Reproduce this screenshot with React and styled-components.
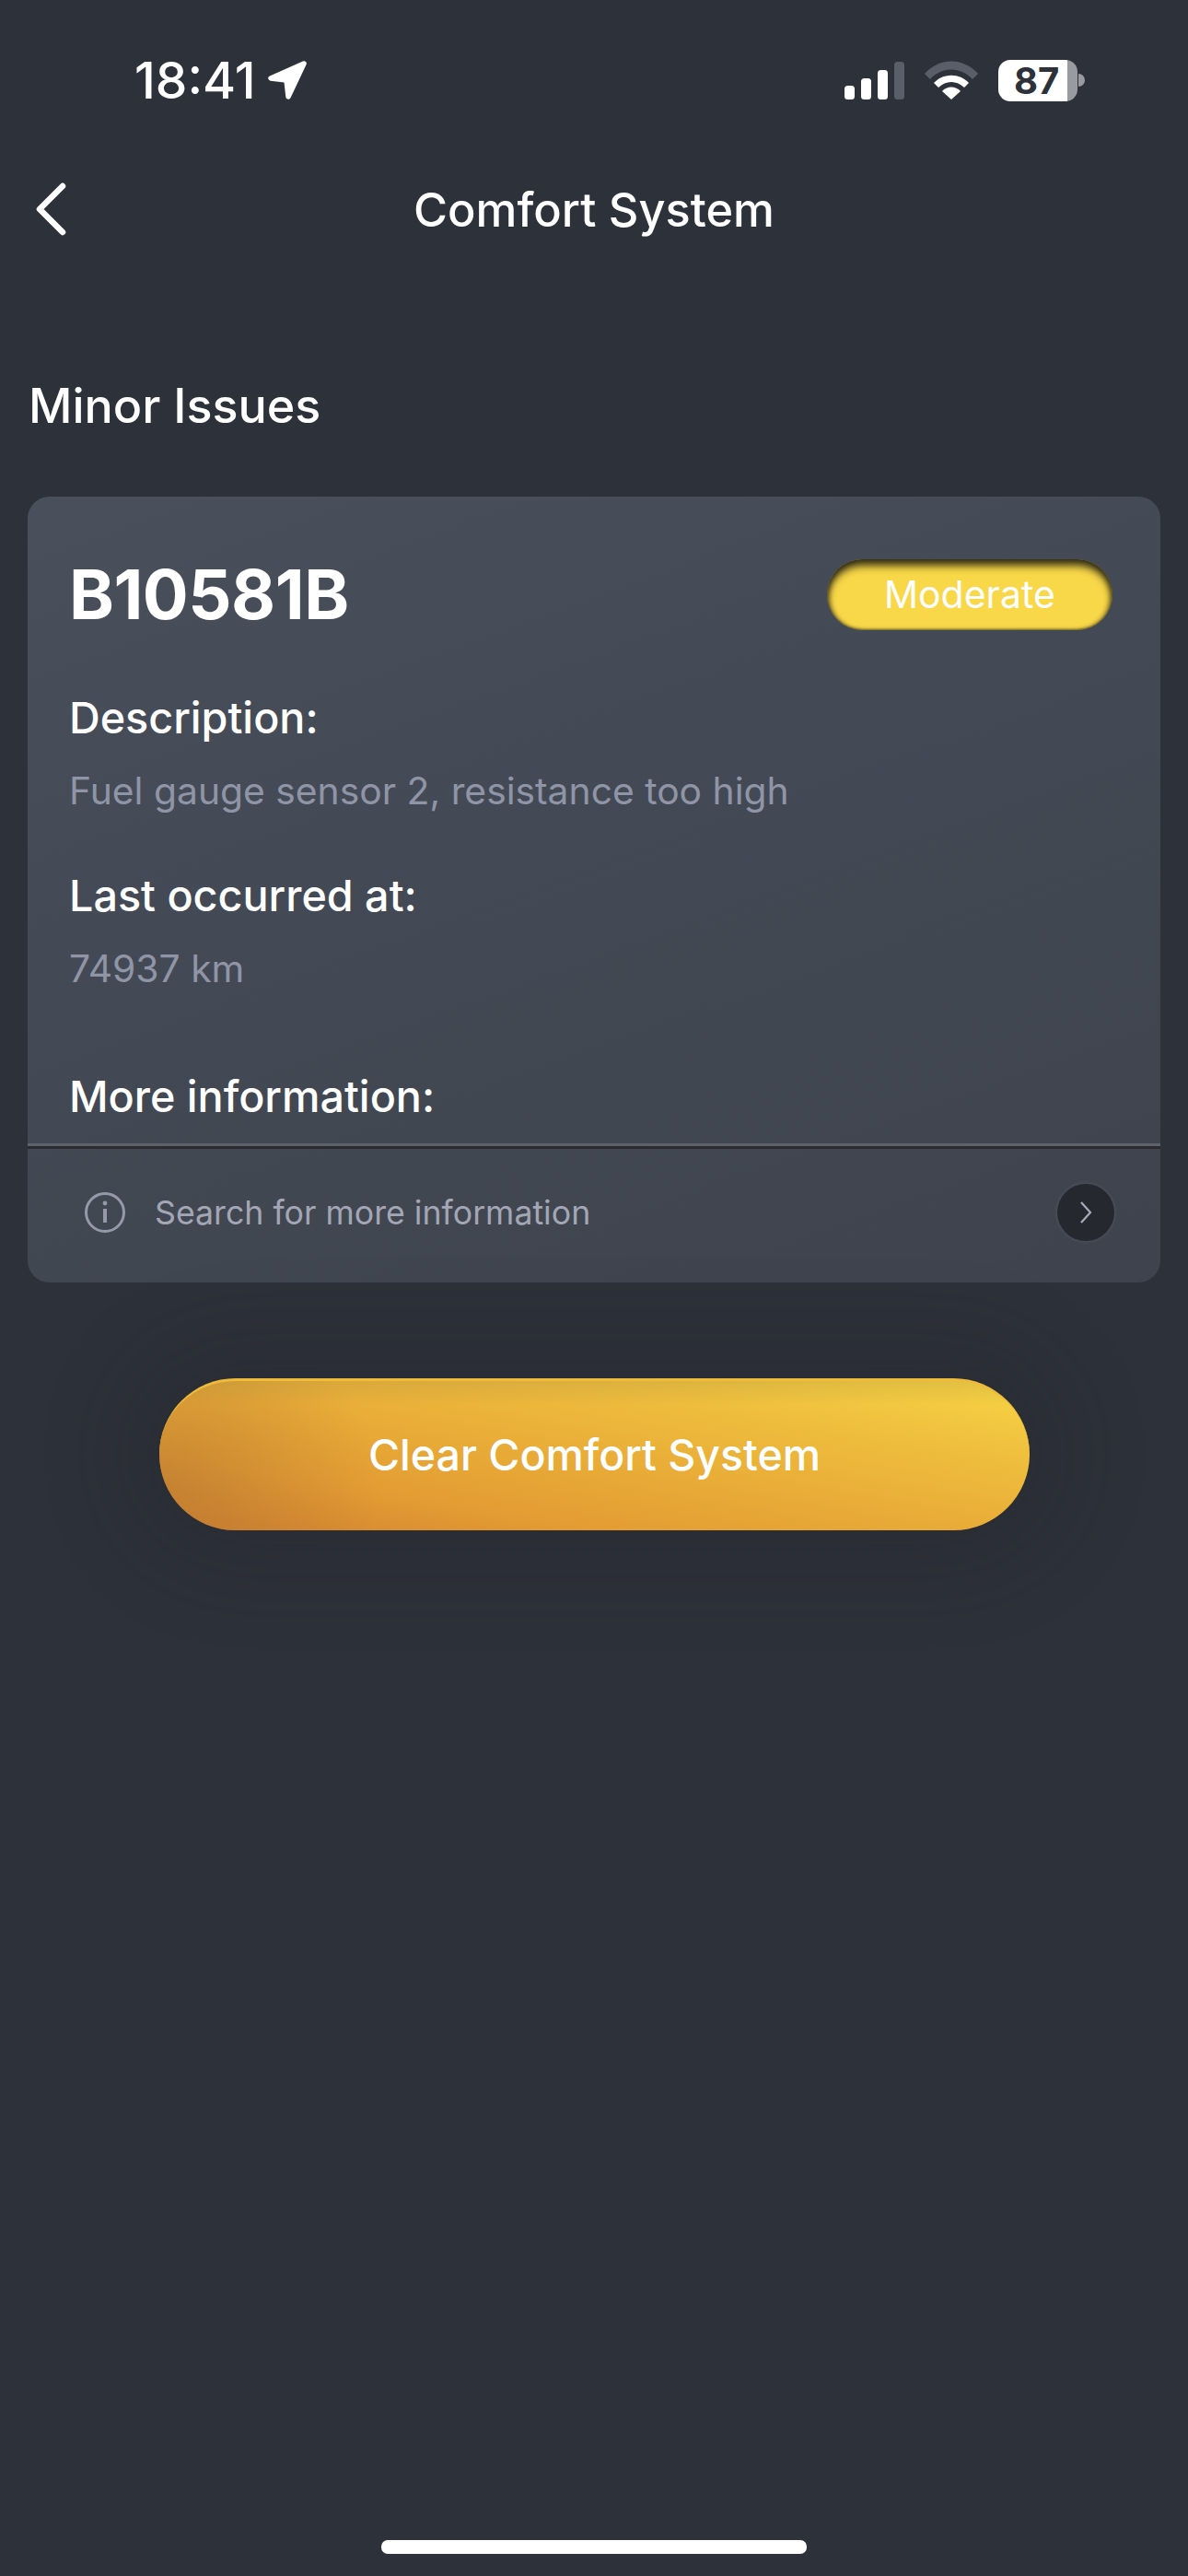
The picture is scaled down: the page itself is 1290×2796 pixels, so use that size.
import React from "react";
import styled, { createGlobalStyle } from "styled-components";

const Global = createGlobalStyle`
  html, body { margin: 0; padding: 0; background: #2d3139; }
  * { box-sizing: border-box; }
`;

const Screen = styled.div`
  width: 1290px;
  height: 2796px;
  background: #2d3139;
  font-family: Inter, "Noto Sans", sans-serif;
  color: #fff;
  display: flex;
  flex-direction: column;
  overflow: hidden;
`;

const StatusBar = styled.div`
  height: 174px;
  padding: 62px 112px 0 146px;
  display: flex;
  align-items: flex-start;
  justify-content: space-between;
`;
const Clock = styled.div`
  display: flex;
  align-items: center;
  gap: 12px;
  height: 50px;
  font-size: 55px;
  font-weight: 500;
`;
const StatusIcons = styled.div`
  display: flex;
  align-items: center;
  gap: 22px;
  height: 50px;
`;
const Battery = styled.div`
  width: 94px;
  height: 45px;
  display: flex;
  align-items: center;
`;
const BatteryBody = styled.div`
  width: 86px;
  height: 45px;
  border-radius: 13px;
  background: linear-gradient(90deg, #fff 0 87%, #9a9ba0 87%);
  color: #2d3139;
  font-size: 40px;
  font-weight: 700;
  line-height: 45px;
  padding-left: 17px;
`;
const BatteryCap = styled.div`
  width: 7px;
  height: 14px;
  margin-left: 1px;
  border-radius: 0 7px 7px 0;
  background: #9a9ba0;
`;

const NavBar = styled.div`
  height: 106px;
  padding: 0 32px 0 35px;
  display: flex;
  align-items: center;
`;
const BackIcon = styled.svg`
  width: 44px;
  height: 60px;
  flex: none;
`;
const NavTitle = styled.div`
  flex: 1;
  padding-right: 47px;
  text-align: center;
  font-size: 50.5px;
  font-weight: 500;
`;

const Section = styled.h2`
  margin: 0;
  padding: 100px 0 0 31px;
  height: 259px;
  font-size: 52px;
  line-height: 122px;
  font-weight: 500;
`;

const Card = styled.div`
  margin: 0 30px;
  height: 853px;
  border-radius: 24px;
  background: linear-gradient(160deg, #4a505b 0%, #444a55 40%, #3e434d 100%);
  display: flex;
  flex-direction: column;
`;
const CardBody = styled.div`
  height: 702px;
  padding: 68px 52px 0 45px;
  display: flex;
  flex-direction: column;
`;
const CardHead = styled.div`
  display: flex;
  align-items: center;
  justify-content: space-between;
  height: 76px;
  margin-bottom: 68px;
`;
const Code = styled.div`
  font-size: 74px;
  font-weight: 700;
  letter-spacing: -0.5px;
`;
const Badge = styled.div`
  width: 310px;
  height: 77px;
  border-radius: 39px;
  background: #f8d748;
  box-shadow: inset 0 7px 8px rgba(25, 25, 15, 0.85), inset 0 -1px 2px rgba(60, 60, 40, 0.5), inset 3px 0 4px rgba(40, 40, 25, 0.35), inset -3px 0 4px rgba(40, 40, 25, 0.35);
  font-size: 41px;
  line-height: 77px;
  text-align: center;
`;
const Label = styled.div`
  font-size: 46.7px;
  font-weight: 500;
  line-height: 56px;
`;
const Value = styled.div`
  font-size: 40.8px;
  line-height: 52px;
  color: #8f95a6;
  margin-top: 25px;
  margin-bottom: ${(p) => p.$after}px;
`;
const Divider = styled.div`
  height: 6px;
  flex: none;
  background: linear-gradient(180deg, #5d616c 0 50%, #2c2c30 50%);
`;
const InfoRow = styled.div`
  flex: 1;
  padding: 0 50px 8px 62px;
  display: flex;
  align-items: center;
  gap: 32px;
`;
const InfoText = styled.div`
  flex: 1;
  font-size: 35.7px;
  color: #a2a6b5;
`;
const ChevronDisc = styled.div`
  width: 62px;
  height: 62px;
  border-radius: 50%;
  background: #25282e;
  box-shadow: 0 0 4px rgba(110, 115, 125, 0.5);
  display: flex;
  align-items: center;
  justify-content: center;
`;

const ClearButton = styled.div`
  align-self: center;
  width: 945px;
  height: 165px;
  margin-top: 104px;
  margin-left: 1px;
  padding-bottom: 3px;
  border-radius: 83px;
  border-top: 3px solid #eebb3a;
  background:
    linear-gradient(180deg, rgba(150, 125, 60, 0.22) 0, rgba(150, 125, 60, 0) 26px),
    radial-gradient(ellipse 240px 190px at 0% 70%, rgba(175, 115, 50, 0.5), rgba(175, 115, 50, 0)),
    linear-gradient(190deg, #f8d645 0%, #efbf3e 25%, #e9ad38 50%, #e39c33 75%, #d08030 100%);
  box-shadow: 0 0 90px 40px rgba(30, 33, 38, 0.22);
  display: flex;
  align-items: center;
  justify-content: center;
  font-size: 46.5px;
  font-weight: 500;
`;

const Spacer = styled.div`
  flex: 1;
`;
const HomeBar = styled.div`
  align-self: center;
  width: 462px;
  height: 15px;
  border-radius: 7px;
  background: #fff;
  margin-bottom: 24px;
`;

export default function App() {
  return (
    <Screen>
      <Global />
      <StatusBar>
        <Clock>
          18:41
          <svg width="44" height="44" viewBox="0 0 44 44">
            <path d="M40 4 L4 20 L21 22 L23 40 Z" fill="#fff" stroke="#fff" strokeWidth="5.5" strokeLinejoin="round" />
          </svg>
        </Clock>
        <StatusIcons>
          <svg width="65" height="41" viewBox="0 0 65 41">
            <rect x="0" y="26" width="11" height="15" rx="3.5" fill="#fff" />
            <rect x="18" y="18" width="11" height="23" rx="3.5" fill="#fff" />
            <rect x="36" y="9" width="11" height="32" rx="3.5" fill="#fff" />
            <rect x="54" y="0" width="11" height="41" rx="3.5" fill="#5a5e68" />
          </svg>
          <svg width="58" height="42" viewBox="0 0 58 42">
            <path d="M0 14 C16 -4 42 -4 58 14 L52 20 C39 6 19 6 6 20Z" fill="#5a5e68" />
            <path d="M10 24 C20 13 38 13 48 24 L43 29 C35 21 23 21 15 29Z" fill="#fff" />
            <path d="M19 33 C24 27 34 27 39 33 L29 42Z" fill="#fff" />
          </svg>
          <Battery>
            <BatteryBody>87</BatteryBody>
            <BatteryCap />
          </Battery>
        </StatusIcons>
      </StatusBar>
      <NavBar>
        <BackIcon viewBox="0 0 44 60">
          <path d="M33 5 L8 30 L33 55" fill="none" stroke="#fff" strokeWidth="6.5" strokeLinecap="round" strokeLinejoin="round" />
        </BackIcon>
        <NavTitle>Comfort System</NavTitle>
      </NavBar>
      <Section>Minor Issues</Section>
      <Card>
        <CardBody>
          <CardHead>
            <Code>B10581B</Code>
            <Badge>Moderate</Badge>
          </CardHead>
          <Label>Description:</Label>
          <Value $after={60}>Fuel gauge sensor 2, resistance too high</Value>
          <Label>Last occurred at:</Label>
          <Value $after={85}>74937 km</Value>
          <Label>More information:</Label>
        </CardBody>
        <Divider />
        <InfoRow>
          <svg width="44" height="46" viewBox="0 0 44 46">
            <circle cx="22" cy="23" r="20.5" fill="none" stroke="#9599aa" strokeWidth="3" />
            <circle cx="22" cy="13" r="2.4" fill="#9599aa" />
            <rect x="20" y="19" width="4" height="15" fill="#9599aa" />
          </svg>
          <InfoText>Search for more information</InfoText>
          <ChevronDisc>
            <svg width="16" height="26" viewBox="0 0 16 26">
              <path d="M3 2 L13 13 L3 24" fill="none" stroke="#a8acb8" strokeWidth="2.2" />
            </svg>
          </ChevronDisc>
        </InfoRow>
      </Card>
      <ClearButton>Clear Comfort System</ClearButton>
      <Spacer />
      <HomeBar />
    </Screen>
  );
}
